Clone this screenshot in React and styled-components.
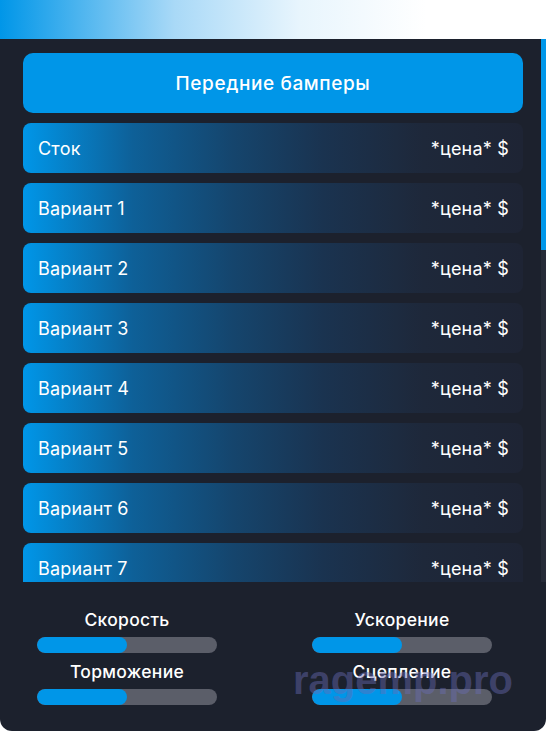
import React from 'react'
import styled, { createGlobalStyle } from 'styled-components'

const Global = createGlobalStyle`
  html, body {
    margin: 0;
    padding: 0;
    background: #fff;
  }
  * { box-sizing: border-box; }
`

const Page = styled.div`
  width: 546px;
  height: 731px;
  display: flex;
  flex-direction: column;
  font-family: Inter, "Noto Sans", sans-serif;
  color: #fff;
`

const TopBar = styled.div`
  height: 39px;
  flex-shrink: 0;
  background: linear-gradient(90deg, #0096e8 0%, #a9d9f7 32%, #e8f5fd 55%, #ffffff 78%);
`

const Panel = styled.div`
  position: relative;
  flex: 1;
  display: flex;
  flex-direction: column;
  background: #1c212d;
  border-radius: 0 0 12px 12px;
  overflow: hidden;
`

const ListArea = styled.div`
  height: 543px;
  flex-shrink: 0;
  display: flex;
`

const Scroller = styled.div`
  flex: 1;
  overflow: hidden;
  padding: 14px 18px 0 23px;
  display: flex;
  flex-direction: column;
  gap: 10px;
`

const ScrollTrack = styled.div`
  width: 5px;
  flex-shrink: 0;
  background: #262b38;
`

const ScrollThumb = styled.div`
  height: 211px;
  background: #0096e8;
`

const Header = styled.div`
  height: 60px;
  flex-shrink: 0;
  border-radius: 10px;
  background: #0096e8;
  display: flex;
  align-items: center;
  justify-content: center;
  font-size: 19px;
  font-weight: 500;
  letter-spacing: 0.6px;
`

const Row = styled.div`
  height: 50px;
  flex-shrink: 0;
  border-radius: 8px;
  padding: 0 14px 0 15px;
  display: flex;
  align-items: center;
  justify-content: space-between;
  font-size: 18px;
  letter-spacing: 0.2px;
  background: linear-gradient(90deg, #0096e8 0%, #0e6098 22%, #15456d 42%, #1a3350 60%, #1e283a 80%, #1e2434 100%);
`

const Stats = styled.div`
  flex: 1;
  padding: 27px 37px 0;
  display: grid;
  grid-template-columns: 180px 180px;
  column-gap: 95px;
  row-gap: 8px;
  align-content: start;
`

const Stat = styled.div`
  display: flex;
  flex-direction: column;
  align-items: center;
  gap: 6px;
`

const StatLabel = styled.div`
  font-size: 17.5px;
  line-height: 22px;
  font-weight: 500;
  letter-spacing: 0.3px;
`

const Track = styled.div`
  width: 100%;
  height: 16px;
  border-radius: 8px;
  background: #5b5e69;
  overflow: hidden;
`

const Fill = styled.div`
  height: 100%;
  border-radius: 8px;
  background: #0096e8;
`

const Watermark = styled.div`
  position: absolute;
  left: 293px;
  top: 618px;
  font-family: "Liberation Sans", Arial, sans-serif;
  font-weight: 700;
  font-size: 40px;
  line-height: 46px;
  color: rgba(105, 108, 180, 0.45);
  pointer-events: none;
`

const rows = ['Сток', ...Array.from({ length: 21 }, (_, i) => `Вариант ${i + 1}`)]

const stats = [
  { name: 'Скорость', value: 50 },
  { name: 'Ускорение', value: 50 },
  { name: 'Торможение', value: 50 },
  { name: 'Сцепление', value: 50 },
]

export default function App() {
  return (
    <Page>
      <Global />
      <TopBar />
      <Panel>
        <ListArea>
          <Scroller>
            <Header>Передние бамперы</Header>
            {rows.map((r) => (
              <Row key={r}>
                <span>{r}</span>
                <span>*цена* $</span>
              </Row>
            ))}
          </Scroller>
          <ScrollTrack>
            <ScrollThumb />
          </ScrollTrack>
        </ListArea>
        <Stats>
          {stats.map((s) => (
            <Stat key={s.name}>
              <StatLabel>{s.name}</StatLabel>
              <Track>
                <Fill style={{ width: `${s.value}%` }} />
              </Track>
            </Stat>
          ))}
        </Stats>
        <Watermark>ragemp.pro</Watermark>
      </Panel>
    </Page>
  )
}
